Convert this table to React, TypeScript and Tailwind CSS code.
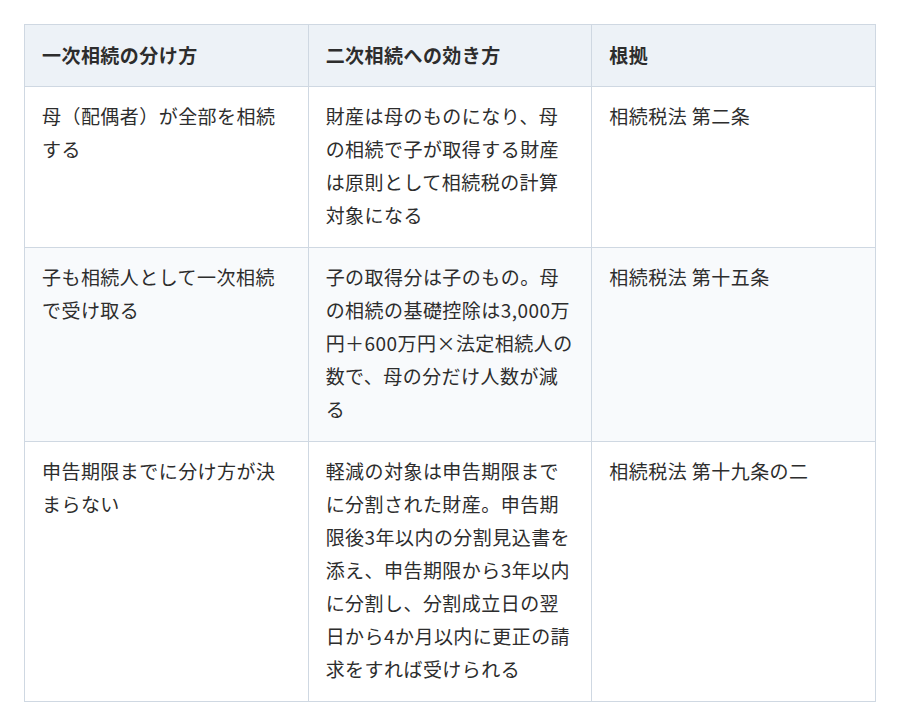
const rows = [
  {
    split: '母（配偶者）が全部を相続する',
    effect: '財産は母のものになり、母の相続で子が取得する財産は原則として相続税の計算対象になる',
    basis: '相続税法 第二条',
  },
  {
    split: '子も相続人として一次相続で受け取る',
    effect: '子の取得分は子のもの。母の相続の基礎控除は3,000万円＋600万円×法定相続人の数で、母の分だけ人数が減る',
    basis: '相続税法 第十五条',
  },
  {
    split: '申告期限までに分け方が決まらない',
    effect: '軽減の対象は申告期限までに分割された財産。申告期限後3年以内の分割見込書を添え、申告期限から3年以内に分割し、分割成立日の翌日から4か月以内に更正の請求をすれば受けられる',
    basis: '相続税法 第十九条の二',
  },
]

export default function App() {
  return (
    <div className="min-h-[727px] bg-white px-[24px] pt-[24px] font-['Noto_Sans_CJK_JP','Noto_Sans',sans-serif] text-[#2d2d2d]">
      <table className="w-full table-fixed border-collapse text-[19px] leading-[33px] tracking-[0.45px]">
        <thead>
          <tr className="bg-[#edf2f7]">
            <th className="border border-[#cfd8e2] px-[17px] pt-[13px] pb-[15px] text-left font-bold">一次相続の分け方</th>
            <th className="border border-[#cfd8e2] px-[17px] pt-[13px] pb-[15px] text-left font-bold">二次相続への効き方</th>
            <th className="border border-[#cfd8e2] px-[17px] pt-[13px] pb-[15px] text-left font-bold">根拠</th>
          </tr>
        </thead>
        <tbody>
          {rows.map((r, i) => (
            <tr key={i} className={i % 2 === 1 ? 'bg-[#f8fafc]' : 'bg-white'}>
              <td className="border border-[#cfd8e2] px-[17px] pt-[12px] pb-[16px] align-top">{r.split}</td>
              <td className="border border-[#cfd8e2] px-[17px] pt-[12px] pb-[16px] align-top">{r.effect}</td>
              <td className="border border-[#cfd8e2] px-[17px] pt-[12px] pb-[16px] align-top">{r.basis}</td>
            </tr>
          ))}
        </tbody>
      </table>
    </div>
  )
}
